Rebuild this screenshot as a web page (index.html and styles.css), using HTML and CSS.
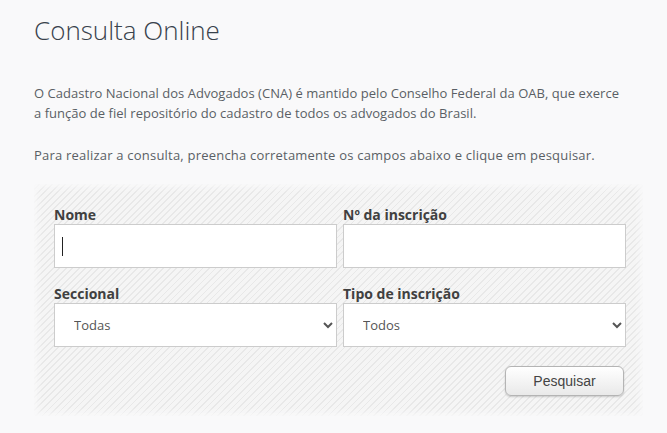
FILE: index.html
```html
<!DOCTYPE html>
<html lang="pt-BR">
<head>
<meta charset="utf-8">
<title>Consulta Online</title>
<link rel="stylesheet" href="styles.css">
</head>
<body>
<div class="page">
  <h1 class="title">Consulta Online</h1>
  <p class="intro">O Cadastro Nacional dos Advogados (CNA) é mantido pelo Conselho Federal da OAB, que exerce<br>a função de fiel repositório do cadastro de todos os advogados do Brasil.</p>
  <p class="intro second">Para realizar a consulta, preencha corretamente os campos abaixo e clique em pesquisar.</p>
  <form class="search">
    <div class="grid">
      <div class="field">
        <label class="label" for="nome">Nome</label>
        <div class="input-wrap">
          <input class="control" id="nome" type="text">
          <span class="caret"></span>
        </div>
      </div>
      <div class="field">
        <label class="label" for="insc">Nº da inscrição</label>
        <input class="control" id="insc" type="text">
      </div>
      <div class="field">
        <label class="label" for="sec">Seccional</label>
        <select class="control select" id="sec"><option>Todas</option></select>
      </div>
      <div class="field">
        <label class="label" for="tipo">Tipo de inscrição</label>
        <select class="control select" id="tipo"><option>Todos</option></select>
      </div>
    </div>
    <div class="actions">
      <button class="btn" type="button">Pesquisar</button>
    </div>
  </form>
</div>
</body>
</html>
```
FILE: styles.css
```css
html, body {
  margin: 0;
  padding: 0;
  background: #f9f9fa;
}
body {
  font-family: "Open Sans", "DejaVu Sans", sans-serif;
}
.page {
  width: 609px;
  padding-left: 34px;
}
.title {
  margin: 12px 0 0;
  font-size: 26px;
  line-height: 36px;
  font-weight: 300;
  color: #38424c;
}
.intro {
  margin: 34.5px 0 0;
  font-size: 13px;
  line-height: 20.8px;
  color: #5a5f65;
  white-space: nowrap;
  letter-spacing: 0.03px;
}
.intro.second {
  margin-top: 21.4px;
  letter-spacing: 0.21px;
}
.search {
  margin-top: 17.7px;
  padding: 21px 17px 20px 20px;
  background: repeating-linear-gradient(135deg, #f5f5f5 0 3.4px, #e8e8e8 3.4px 4.6px);
  box-shadow: inset 0 0 6px 3px #f9f9fa;
}
.grid {
  display: grid;
  grid-template-columns: 283px 283px;
  column-gap: 6px;
  row-gap: 16px;
}
.field {
  display: flex;
  flex-direction: column;
}
.input-wrap {
  position: relative;
  display: flex;
  flex-direction: column;
}
.caret {
  position: absolute;
  left: 8px;
  top: 13px;
  width: 1px;
  height: 19px;
  background: #222222;
}
.label {
  font-size: 14px;
  line-height: 19px;
  font-weight: 700;
  color: #404040;
}
.control {
  box-sizing: border-box;
  height: 44px;
  margin: 0;
  border: 1px solid #cccccc;
  border-radius: 0;
  background: #ffffff;
  font-family: "Open Sans", sans-serif;
  font-size: 13px;
  color: #555555;
  padding: 0 7px;
  outline: none;
}
.select {
  padding-left: 15px;
}
.actions {
  display: flex;
  justify-content: flex-end;
  margin-top: 19px;
  padding-right: 2px;
}
.btn {
  width: 119px;
  height: 30px;
  border: 1px solid #b4b4b4;
  border-radius: 6px;
  background: linear-gradient(#ffffff, #e9e9e9);
  box-shadow: 0 1px 2px rgba(0, 0, 0, 0.18);
  font-family: "Liberation Sans", Arial, sans-serif;
  font-size: 14px;
  color: #444444;
  padding: 0;
}
```
